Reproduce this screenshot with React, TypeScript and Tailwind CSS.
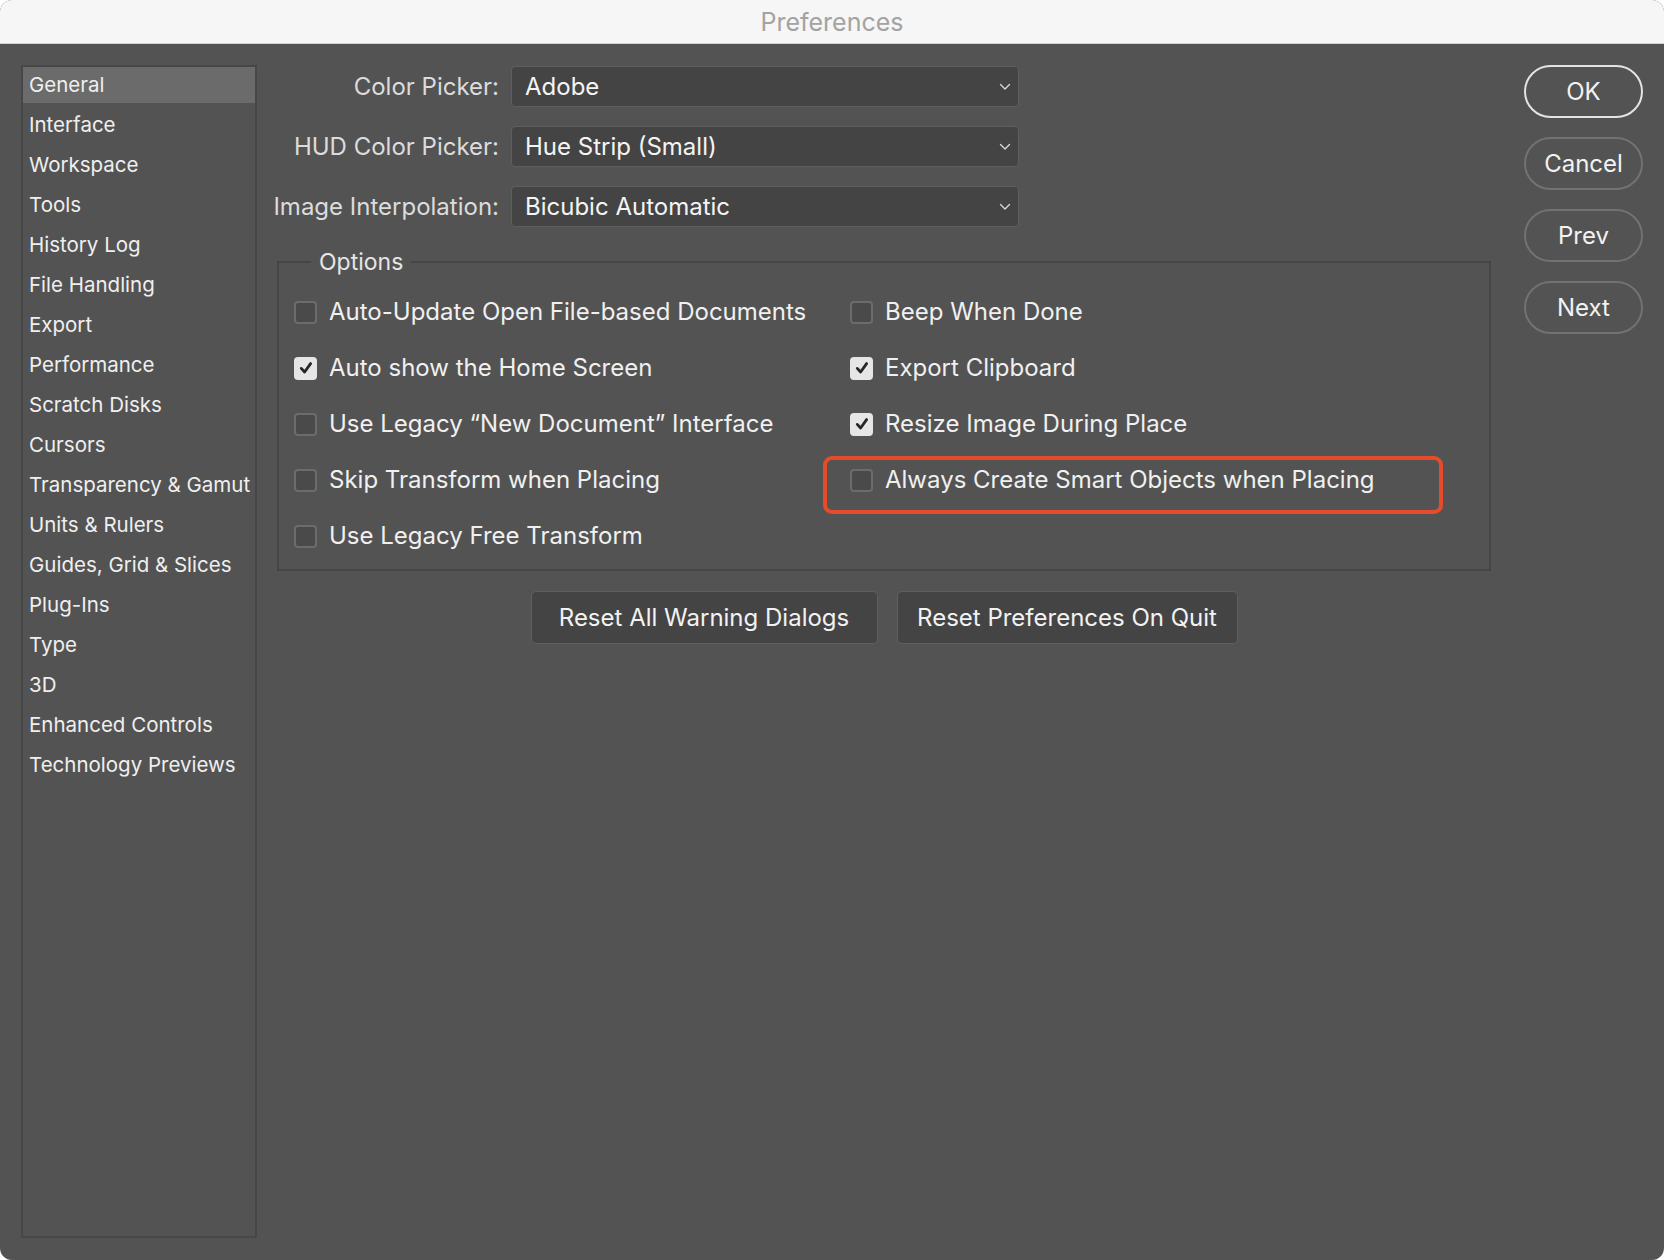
import React from 'react';

const SIDEBAR = [
  'General', 'Interface', 'Workspace', 'Tools', 'History Log', 'File Handling',
  'Export', 'Performance', 'Scratch Disks', 'Cursors', 'Transparency & Gamut',
  'Units & Rulers', 'Guides, Grid & Slices', 'Plug-Ins', 'Type', '3D',
  'Enhanced Controls', 'Technology Previews',
];

const PICKERS = [
  { label: 'Color Picker:', value: 'Adobe' },
  { label: 'HUD Color Picker:', value: 'Hue Strip (Small)' },
  { label: 'Image Interpolation:', value: 'Bicubic Automatic' },
];

type Opt = { label: string; checked: boolean; marked?: boolean } | null;

// rows of [left, right]
const OPTIONS: [Opt, Opt][] = [
  [{ label: 'Auto-Update Open File-based Documents', checked: false }, { label: 'Beep When Done', checked: false }],
  [{ label: 'Auto show the Home Screen', checked: true }, { label: 'Export Clipboard', checked: true }],
  [{ label: 'Use Legacy \u201CNew Document\u201D Interface', checked: false }, { label: 'Resize Image During Place', checked: true }],
  [{ label: 'Skip Transform when Placing', checked: false }, { label: 'Always Create Smart Objects when Placing', checked: false, marked: true }],
  [{ label: 'Use Legacy Free Transform', checked: false }, null],
];

function Checkbox({ checked }: { checked: boolean }) {
  if (checked) {
    return (
      <span className="w-[23px] h-[23px] rounded-[4px] bg-[#e6e6e6] flex items-center justify-center shrink-0">
        <svg width="16" height="16" viewBox="0 0 16 16" fill="none">
          <path d="M3.3 8.4 L6.6 12 L12.6 3.6" stroke="#262626" strokeWidth="2.8" strokeLinecap="round" strokeLinejoin="round" />
        </svg>
      </span>
    );
  }
  return <span className="w-[23px] h-[23px] rounded-[4px] bg-[#4a4a4a] border-2 border-[#6c6c6c] shrink-0" />;
}

function Option({ label, checked }: { label: string; checked: boolean }) {
  return (
    <div className="flex items-center gap-[12px] h-full">
      <Checkbox checked={checked} />
      <span className="text-[24px] text-[#f0f0f0] whitespace-nowrap">{label}</span>
    </div>
  );
}

export default function App() {
  return (
    <div className="w-[1664px] h-[1260px] bg-white" style={{ fontFamily: 'Inter, "Liberation Sans", sans-serif' }}>
      <div className="w-full h-full rounded-[12px] overflow-hidden flex flex-col bg-[#535353]">
        {/* Title bar */}
        <div className="h-[44px] shrink-0 bg-[#f6f6f6] border-b border-[#d2d2d2] flex items-center justify-center pt-[3px]">
          <span className="text-[25px] text-[#a3a3a3]">Preferences</span>
        </div>

        <div className="flex-1 flex pl-[21px] pr-[21px] pt-[21px] pb-[22px]">
          {/* Sidebar */}
          <div className="w-[236px] shrink-0 border-2 border-[#474747]">
            {SIDEBAR.map((item, i) =>
              i === 0 ? (
                <div key={item} className="h-[36px] mb-[2px] flex items-center pl-[6px] text-[20.5px] text-[#efefef] bg-[#6b6b6b] whitespace-nowrap">
                  {item}
                </div>
              ) : (
                <div key={item} className="h-[40px] flex items-center pl-[6px] text-[20.5px] text-[#efefef] whitespace-nowrap">
                  {item}
                </div>
              )
            )}
          </div>

          {/* Main */}
          <div className="ml-[9px] w-[1225px] shrink-0 pt-[1px]">
            <div className="flex flex-col gap-[19px]">
              {PICKERS.map((p) => (
                <div key={p.label} className="flex items-center gap-[12px]">
                  <div className="w-[233px] text-right text-[24px] text-[#dcdcdc] whitespace-nowrap">{p.label}</div>
                  <div className="w-[508px] h-[41px] rounded-[4px] bg-[#444444] border-[1.5px] border-[#5e5e5e] flex items-center justify-between pl-[13px] pr-[7px]">
                    <span className="text-[24px] text-[#f4f4f4]">{p.value}</span>
                    <svg width="12" height="8" viewBox="0 0 12 8" fill="none">
                      <path d="M1.5 1.5 L6 6 L10.5 1.5" stroke="#d8d8d8" strokeWidth="1.4" strokeLinecap="round" strokeLinejoin="round" />
                    </svg>
                  </div>
                </div>
              ))}
            </div>

            <fieldset className="ml-[11px] mt-[21px] w-[1214px] border-2 border-[#464646] pl-[15px] pb-[5px]">
              <legend className="ml-[17px] px-[8px] text-[23px] text-[#e6e6e6] leading-[28px]">Options</legend>
              <div className="grid grid-cols-[556px_1fr] auto-rows-[56px] mt-[8px]">
                {OPTIONS.map(([l, r], i) => (
                  <React.Fragment key={i}>
                    <div>{l && <Option label={l.label} checked={l.checked} />}</div>
                    <div className="relative">
                      {r && <Option label={r.label} checked={r.checked} />}
                      {r?.marked && (
                        <span className="absolute left-[-27px] w-[620px] top-[4px] bottom-[-6px] border-[4px] border-[#e64b2b] rounded-[9px]" />
                      )}
                    </div>
                  </React.Fragment>
                ))}
              </div>
            </fieldset>

            <div className="ml-[11px] w-[1214px] mt-[20px] flex justify-center gap-[19px]">
              <button className="w-[347px] h-[53px] rounded-[5px] bg-[#444444] border-[1.5px] border-[#5f5f5f] text-[24px] text-[#f2f2f2]">
                Reset All Warning Dialogs
              </button>
              <button className="w-[341px] h-[53px] rounded-[5px] bg-[#444444] border-[1.5px] border-[#5f5f5f] text-[24px] text-[#f2f2f2]">
                Reset Preferences On Quit
              </button>
            </div>
          </div>

          {/* Right buttons */}
          <div className="ml-auto w-[119px] flex flex-col gap-[19px]">
            {['OK', 'Cancel', 'Prev', 'Next'].map((b, i) => (
              <button
                key={b}
                className={`h-[53px] rounded-full border-2 text-[24px] text-[#f2f2f2] ${i === 0 ? 'border-[#e4e4e4]' : 'border-[#727272]'}`}
              >
                {b}
              </button>
            ))}
          </div>
        </div>
      </div>
    </div>
  );
}
